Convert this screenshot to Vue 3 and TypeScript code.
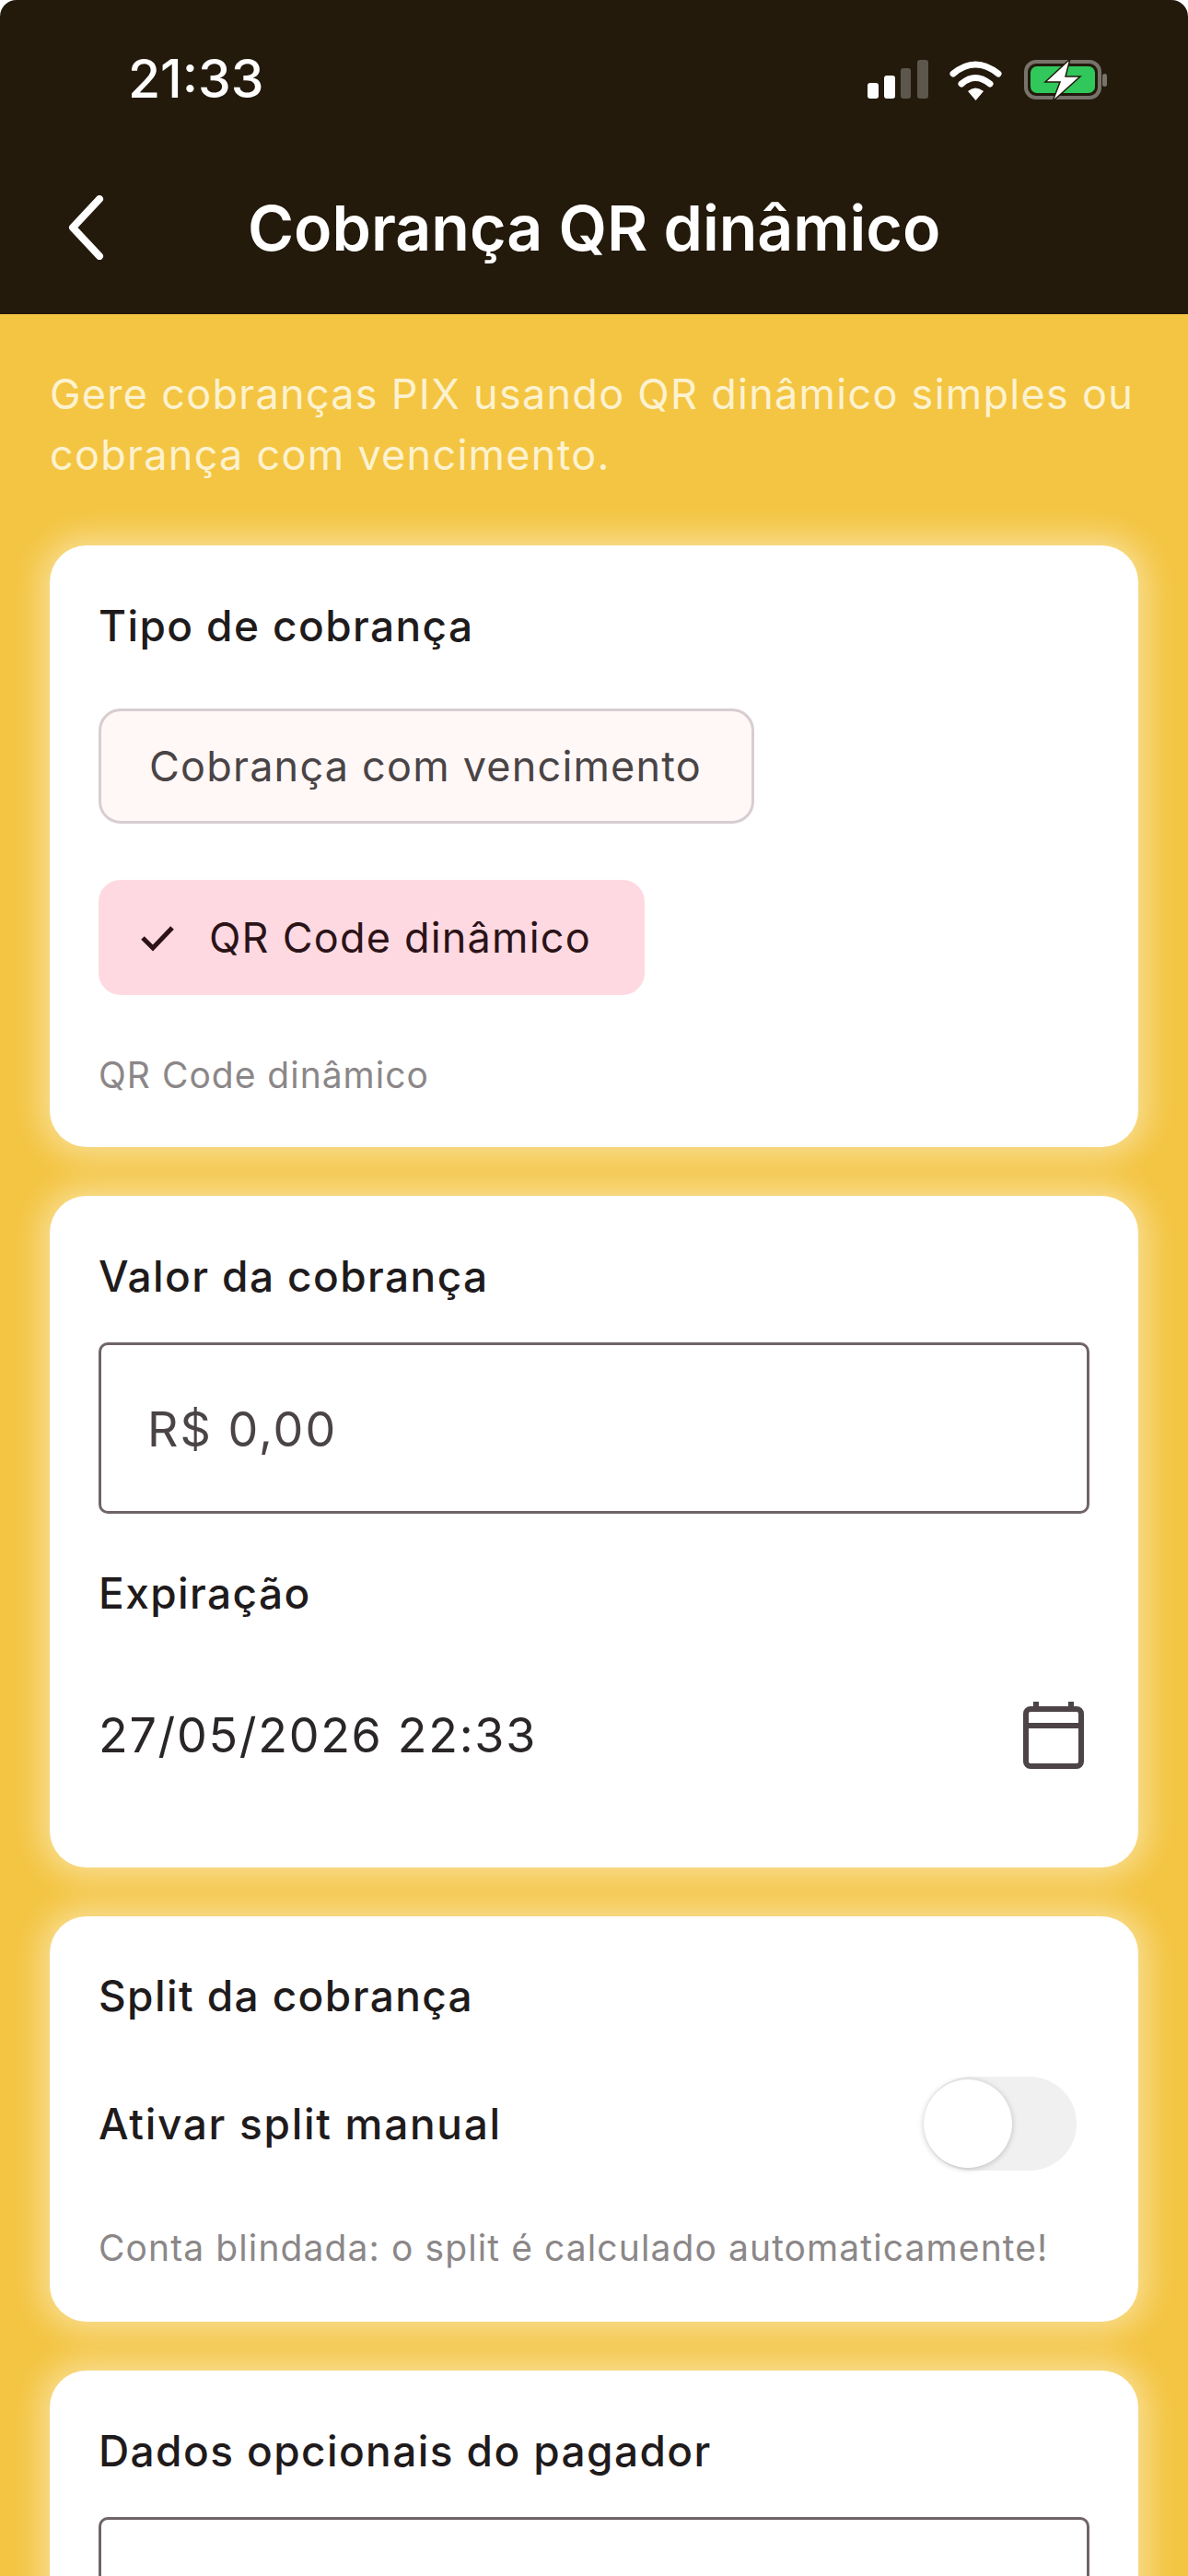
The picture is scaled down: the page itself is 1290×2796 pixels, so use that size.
<script setup lang="ts">
import { ref } from 'vue';

const splitEnabled = ref(false);
const selectedType = ref('qr');
</script>

<template>
  <div class="screen">
    <header class="top">
      <div class="status">
        <span class="time">21:33</span>
        <svg class="status-icons" width="262" height="46" viewBox="0 0 262 46">
          <rect x="1" y="26" width="12" height="17" rx="3" fill="#fff" />
          <rect x="19" y="18" width="12" height="25" rx="3" fill="#fff" />
          <rect x="37" y="10" width="11" height="33" rx="3" fill="#5c564c" />
          <rect x="55" y="1" width="12" height="42" rx="3" fill="#5c564c" />
          <path d="M94 16 Q118 -4 143 16" fill="none" stroke="#fff" stroke-width="7" stroke-linecap="round" />
          <path d="M103 27 Q118 14 134 27" fill="none" stroke="#fff" stroke-width="7" stroke-linecap="round" />
          <path d="M110 35 Q118 28 127 35 L118.500 45 Z" fill="#fff" />
          <rect x="173" y="3" width="80" height="39" rx="11" fill="none" stroke="#77736a" stroke-width="4" />
          <rect x="178" y="8" width="70" height="29" rx="7" fill="#30c85a" />
          <rect x="256" y="16" width="5" height="14" rx="2.500" fill="#77736a" />
          <path d="M221 0 L194 25 L210 25 L202 46 L232 19 L216 19 Z" fill="#fff" stroke="#231a0c" stroke-width="1.500" />
        </svg>
      </div>
      <div class="nav">
        <svg class="back" width="44" height="70" viewBox="0 0 44 70">
          <path d="M36 4 L7 35 L36 66" fill="none" stroke="#fff" stroke-width="8" stroke-linecap="round" stroke-linejoin="round" />
        </svg>
        <h1>Cobrança QR dinâmico</h1>
      </div>
    </header>

    <main class="content">
      <p class="intro">Gere cobranças PIX usando QR dinâmico simples ou cobrança com vencimento.</p>

      <section class="card type-card">
        <h2>Tipo de cobrança</h2>
        <div class="chips">
          <button class="chip" @click="selectedType = 'due'">Cobrança com vencimento</button>
          <button class="chip selected" @click="selectedType = 'qr'">
            <svg width="38" height="30" viewBox="0 0 38 30">
              <path d="M3 15 L14 26 L35 4" fill="none" stroke="#2b1318" stroke-width="5" />
            </svg>
            QR Code dinâmico
          </button>
        </div>
        <p class="hint">QR Code dinâmico</p>
      </section>

      <section class="card value-card">
        <h2>Valor da cobrança</h2>
        <div class="input amount">R$ 0,00</div>
        <h2 class="expire-title">Expiração</h2>
        <div class="date-row">
          <span>27/05/2026 22:33</span>
          <svg width="66" height="74" viewBox="0 0 66 74">
            <path d="M14 1 V10 M52 1 V10" stroke="#4d4448" stroke-width="6" />
            <rect x="3" y="9" width="60" height="62" rx="5" fill="none" stroke="#4d4448" stroke-width="6" />
            <path d="M3 27 H63" stroke="#4d4448" stroke-width="6" />
          </svg>
        </div>
      </section>

      <section class="card split-card">
        <h2>Split da cobrança</h2>
        <div class="switch-row">
          <span>Ativar split manual</span>
          <button class="switch" :class="{ on: splitEnabled }" @click="splitEnabled = !splitEnabled">
            <span class="knob"></span>
          </button>
        </div>
        <p class="hint small">Conta blindada: o split é calculado automaticamente!</p>
      </section>

      <section class="card payer-card">
        <h2>Dados opcionais do pagador</h2>
        <div class="input blank"></div>
      </section>
    </main>
  </div>
</template>

<style scoped>
.screen {
  width: 1290px;
  height: 2796px;
  overflow: hidden;
  display: flex;
  flex-direction: column;
  background: #fff;
  font-family: Inter, "Noto Sans", sans-serif;
  color: #1f1b1c;
}
.top {
  height: 341px;
  flex-shrink: 0;
  box-sizing: border-box;
  background: #231a0c;
  border-radius: 18px 18px 0 0;
  color: #fff;
}
.status {
  height: 212px;
  box-sizing: border-box;
  padding: 57px 87px 0 139px;
  display: flex;
  justify-content: space-between;
  align-items: flex-start;
}
.time {
  font-size: 57px;
  line-height: 58px;
  font-weight: 500;
}
.status-icons {
  margin-top: 7px;
}
.nav {
  display: flex;
  align-items: center;
  padding-left: 72px;
  height: 70px;
}
.back {
  flex-shrink: 0;
}
h1 {
  margin: 0 0 0 153px;
  font-size: 68px;
  font-weight: 600;
  line-height: 70px;
  white-space: nowrap;
}
.content {
  flex: 1;
  background: #f4c542;
  padding: 0 54px;
}
.intro {
  margin: 54px 0 65px;
  font-size: 45px;
  line-height: 66px;
  letter-spacing: 1.27px;
  color: #fdf2d0;
}
.card {
  background: #fff;
  border-radius: 40px;
  box-shadow: 0 0 34px 10px rgba(255, 255, 255, 0.45);
  padding: 0 53px;
  margin-bottom: 53px;
}
h2 {
  margin: 0;
  font-size: 46px;
  font-weight: 550;
  line-height: 60px;
  letter-spacing: 1.4px;
}
.type-card {
  height: 653px;
  padding-top: 57px;
  box-sizing: border-box;
}
.chips {
  margin-top: 60px;
  display: flex;
  flex-direction: column;
  align-items: flex-start;
  gap: 61px;
}
.chip {
  height: 125px;
  box-sizing: border-box;
  padding: 0 54px 0 52px;
  display: flex;
  align-items: center;
  gap: 37px;
  border: 3px solid #d8cdd0;
  border-radius: 24px;
  background: #fff8f7;
  color: #4a4446;
  font: 420 45px Inter, "Noto Sans", sans-serif;
  letter-spacing: 1.2px;
}
.chip.selected {
  padding: 0 55px 0 42px;
  border-color: #ffd9e1;
  background: #ffd9e1;
  color: #2b1318;
}
.hint {
  margin: 60px 0 0;
  font-size: 39px;
  line-height: 54px;
  letter-spacing: 1px;
  color: #8b8788;
}
.value-card {
  height: 729px;
  padding-top: 57px;
  box-sizing: border-box;
}
.input {
  box-sizing: border-box;
  border: 3px solid #6f6468;
  border-radius: 10px;
}
.amount {
  margin-top: 42px;
  height: 186px;
  padding: 2px 0 0 50px;
  display: flex;
  align-items: center;
  font-size: 52px;
  letter-spacing: 2px;
  color: #4a4446;
}
.expire-title {
  margin-top: 56px;
}
.date-row {
  margin-top: 87px;
  display: flex;
  justify-content: space-between;
  align-items: center;
  padding-right: 6px;
  font-size: 52px;
  letter-spacing: 1.7px;
  color: #2a2627;
}
.split-card {
  height: 440px;
  padding-top: 56px;
  box-sizing: border-box;
}
.switch-row {
  margin-top: 58px;
  height: 102px;
  display: flex;
  justify-content: space-between;
  align-items: center;
  padding-right: 14px;
  font-size: 46px;
  font-weight: 550;
  letter-spacing: 1.7px;
}
.switch {
  width: 166px;
  height: 102px;
  padding: 0;
  border: 0;
  border-radius: 51px;
  background: #f0f0f0;
  display: flex;
  align-items: center;
}
.knob {
  width: 96px;
  height: 96px;
  border-radius: 50%;
  background: #fff;
  box-shadow: 0 1px 6px rgba(0, 0, 0, 0.22);
}
.hint.small {
  margin-top: 57px;
  font-size: 39px;
  letter-spacing: 1.1px;
}
.payer-card {
  height: 400px;
  padding-top: 57px;
  box-sizing: border-box;
}
.blank {
  margin-top: 42px;
  height: 184px;
}
</style>

<style>
html,
body {
  margin: 0;
}
</style>
